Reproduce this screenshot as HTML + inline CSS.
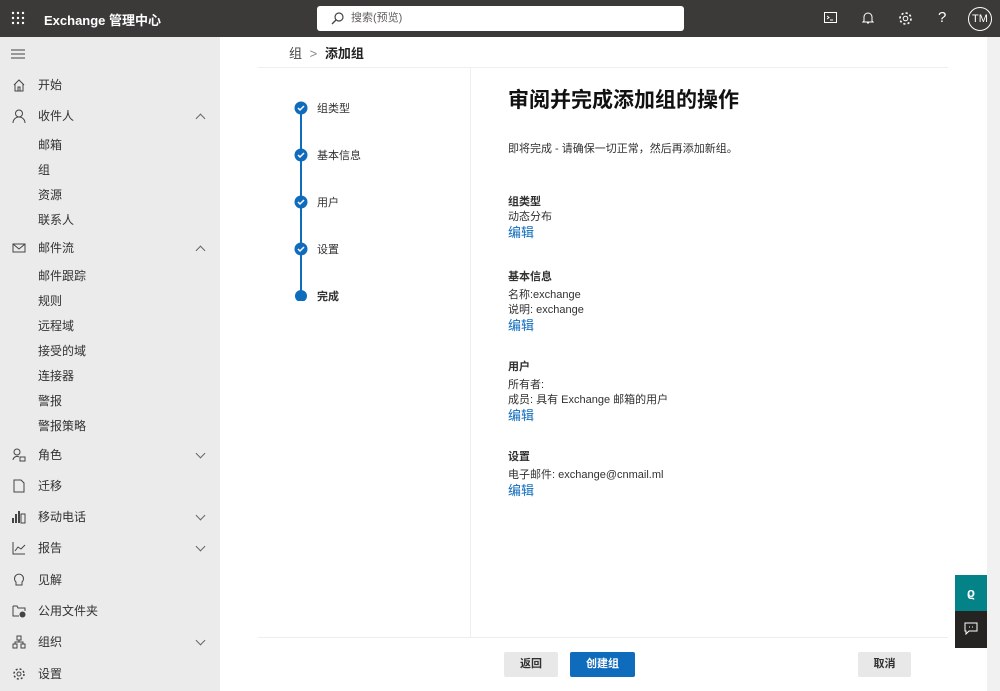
<!DOCTYPE html><html><head><meta charset="utf-8"><style>
*{margin:0;padding:0;box-sizing:border-box}
body{width:1000px;height:691px;overflow:hidden;background:#fff;font-family:"Liberation Sans","Noto Sans CJK SC",sans-serif;color:#323130;position:relative;font-size:12px}
.hd{position:absolute;left:0;top:0;width:1000px;height:37px;background:#3b3a39;color:#fff}
.abs{position:absolute}
.side{position:absolute;left:0;top:37px;width:220px;height:654px;background:#ebebeb}
.ni{position:absolute;left:38px;font-size:12px;color:#323130;margin-top:-2px}
.ic{position:absolute;left:12px;width:14px;height:14px}
.chev{position:absolute;left:197px;width:7px;height:7px;border-left:1px solid #666;border-top:1px solid #666}
.up{transform:rotate(45deg)}.dn{transform:rotate(225deg)}
.lk{color:#0f6cbd;font-size:13px}
.btn{position:absolute;top:652px;height:25px;font-size:11px;font-weight:bold;text-align:center;line-height:25px;border-radius:2px}
</style></head><body>
<div class="hd">
<svg class="abs" style="left:11px;top:11px" width="14" height="14"><g fill="#fff"><circle cx="2" cy="2" r="1.2"/><circle cx="7" cy="2" r="1.2"/><circle cx="12" cy="2" r="1.2"/><circle cx="2" cy="7" r="1.2"/><circle cx="7" cy="7" r="1.2"/><circle cx="12" cy="7" r="1.2"/><circle cx="2" cy="12" r="1.2"/><circle cx="7" cy="12" r="1.2"/><circle cx="12" cy="12" r="1.2"/></g></svg>
<div class="abs" style="left:44px;top:10px;font-size:13px;font-weight:bold">Exchange 管理中心</div>
<div class="abs" style="left:317px;top:6px;width:367px;height:25px;background:#fff;border-radius:3px;color:#605e5c;font-size:11px;line-height:25px;padding-left:34px">搜索(预览)
<svg class="abs" style="left:14px;top:6px" width="13" height="13"><circle cx="8" cy="5" r="4" fill="none" stroke="#444" stroke-width="1.2"/><path d="M5 8L1 12" stroke="#444" stroke-width="1.3"/></svg></div>
<svg class="abs" style="left:824px;top:12px" width="13" height="11"><rect x=".5" y=".5" width="12" height="10" fill="none" stroke="#fff"/><path d="M3 4l2 1.5-2 1.5M6 8h3" stroke="#fff" fill="none"/></svg>
<svg class="abs" style="left:862px;top:11px" width="12" height="14"><path d="M2 10V6a4 4 0 018 0v4l1 1H1zM5 12h2" stroke="#fff" fill="none"/></svg>
<svg class="abs" style="left:898px;top:11px" width="15" height="15"><circle cx="7.5" cy="7.5" r="2.3" fill="none" stroke="#fff"/><circle cx="7.5" cy="7.5" r="5.5" fill="none" stroke="#fff" stroke-width="1.6" stroke-dasharray="2.2 2.1"/></svg>
<div class="abs" style="left:938px;top:9px;font-size:15px">?</div>
<div class="abs" style="left:968px;top:7px;width:24px;height:24px;border:1px solid #fff;border-radius:50%;font-size:11px;text-align:center;line-height:22px">TM</div>
</div>
<div class="side">
<svg class="abs" style="left:11px;top:12px" width="14" height="10"><path d="M0 1h14M0 5h14M0 9h14" stroke="#444"/></svg>
<svg class="ic" style="top:41px"><path d="M2 7L7 2l5 5M3 6v7h8V6M6 13V9h2v4" stroke="#444" fill="none"/></svg><div class="ni" style="top:41px">开始</div>
<svg class="ic" style="top:72px"><circle cx="7" cy="4.5" r="3.5" fill="none" stroke="#444"/><path d="M1 14a6 6 0 0112 0" stroke="#444" fill="none"/></svg><div class="ni" style="top:72px">收件人</div><div class="chev up" style="top:78px"></div>
<div class="ni" style="top:101px">邮箱</div><div class="ni" style="top:126px">组</div><div class="ni" style="top:151px">资源</div><div class="ni" style="top:176px">联系人</div>
<svg class="ic" style="top:204px"><rect x="1" y="3" width="12" height="8" fill="none" stroke="#444"/><path d="M1 3l6 5 6-5" stroke="#444" fill="none"/></svg><div class="ni" style="top:204px">邮件流</div><div class="chev up" style="top:210px"></div>
<div class="ni" style="top:232px">邮件跟踪</div><div class="ni" style="top:257px">规则</div><div class="ni" style="top:282px">远程域</div><div class="ni" style="top:307px">接受的域</div><div class="ni" style="top:332px">连接器</div><div class="ni" style="top:357px">警报</div><div class="ni" style="top:382px">警报策略</div>
<svg class="ic" style="top:411px"><circle cx="5" cy="4" r="3" fill="none" stroke="#444"/><path d="M1 12a4 4 0 016-3" stroke="#444" fill="none"/><rect x="8" y="9" width="5" height="4" fill="none" stroke="#444"/></svg><div class="ni" style="top:411px">角色</div><div class="chev dn" style="top:413px"></div>
<svg class="ic" style="top:442px"><path d="M2 1h7l3 3v9H2z" stroke="#444" fill="none"/></svg><div class="ni" style="top:442px">迁移</div>
<svg class="ic" style="top:473px"><path d="M1 13V8M4 13V4M7 13V1" stroke="#444" stroke-width="2"/><rect x="9" y="4" width="4" height="9" fill="none" stroke="#444"/></svg><div class="ni" style="top:473px">移动电话</div><div class="chev dn" style="top:475px"></div>
<svg class="ic" style="top:504px"><path d="M1 1v12h12M3 10l3-4 3 2 4-4" stroke="#444" fill="none"/></svg><div class="ni" style="top:504px">报告</div><div class="chev dn" style="top:506px"></div>
<svg class="ic" style="top:536px"><path d="M4 9a4.5 4.5 0 116 0v3H4z" stroke="#444" fill="none"/></svg><div class="ni" style="top:536px">见解</div>
<svg class="ic" style="top:567px"><path d="M1 2h4l1 2h7v3M1 2v10h6" stroke="#444" fill="none"/><circle cx="10.5" cy="10.5" r="3" fill="#444"/></svg><div class="ni" style="top:567px">公用文件夹</div>
<svg class="ic" style="top:598px"><rect x="5" y="1" width="4" height="4" fill="none" stroke="#444"/><rect x="1" y="9" width="4" height="4" fill="none" stroke="#444"/><rect x="9" y="9" width="4" height="4" fill="none" stroke="#444"/><path d="M7 5v2H3v2M7 7h4v2" stroke="#444" fill="none"/></svg><div class="ni" style="top:598px">组织</div><div class="chev dn" style="top:600px"></div>
<svg class="ic" style="top:630px"><circle cx="7" cy="7" r="2" fill="none" stroke="#444"/><circle cx="7" cy="7" r="5" fill="none" stroke="#444" stroke-width="1.5" stroke-dasharray="2 2"/></svg><div class="ni" style="top:630px">设置</div>
</div>
<div class="abs" style="left:987px;top:37px;width:13px;height:654px;background:#f1f1f1"></div>
<div class="abs" style="left:289px;top:43px;font-size:13px;color:#444">组 <span style="color:#888;margin:0 4px">&gt;</span> <b style="color:#222">添加组</b></div>
<div class="abs" style="left:258px;top:67px;width:690px;height:1px;background:#eee"></div>
<div class="abs" style="left:470px;top:68px;width:1px;height:569px;background:#eee"></div>
<div class="abs" style="left:258px;top:637px;width:690px;height:1px;background:#eee"></div>
<div class="abs" style="left:300px;top:114px;width:2px;height:180px;background:#0f6cbd"></div>
<svg class="abs" style="left:294px;top:101px" width="14" height="200">
<g fill="#0f6cbd"><circle cx="7" cy="7" r="6.5"/><circle cx="7" cy="54" r="6.5"/><circle cx="7" cy="101" r="6.5"/><circle cx="7" cy="148" r="6.5"/><circle cx="7" cy="195" r="6"/></g>
<g stroke="#fff" stroke-width="1.5" fill="none"><path d="M4 7l2 2 4-4"/><path d="M4 54l2 2 4-4"/><path d="M4 101l2 2 4-4"/><path d="M4 148l2 2 4-4"/></g></svg>
<div class="abs" style="left:317px;top:100px;font-size:11px">组类型</div><div class="abs" style="left:317px;top:147px;font-size:11px">基本信息</div><div class="abs" style="left:317px;top:194px;font-size:11px">用户</div><div class="abs" style="left:317px;top:241px;font-size:11px">设置</div><div class="abs" style="left:317px;top:288px;font-weight:bold;font-size:11px">完成</div>
<div class="abs" style="left:508px;top:84px;font-size:21px;font-weight:bold;color:#111">审阅并完成添加组的操作</div>
<div class="abs" style="left:508px;top:140px;font-size:11px">即将完成 - 请确保一切正常，然后再添加新组。</div>
<div class="abs" style="left:508px;top:195px;font-size:11px;line-height:15px"><b>组类型</b><br>动态分布<br><span class="lk">编辑</span></div>
<div class="abs" style="left:508px;top:270px;font-size:11px;line-height:15px"><b>基本信息</b><br><span style="display:block;margin-top:3px">名称:exchange</span>说明: exchange<br><span class="lk">编辑</span></div>
<div class="abs" style="left:508px;top:360px;font-size:11px;line-height:15px"><b>用户</b><br><span style="display:block;margin-top:3px">所有者:</span>成员: 具有 Exchange 邮箱的用户<br><span class="lk">编辑</span></div>
<div class="abs" style="left:508px;top:450px;font-size:11px;line-height:15px"><b>设置</b><br><span style="display:block;margin-top:3px">电子邮件: exchange@cnmail.ml</span><span class="lk">编辑</span></div>
<div class="btn" style="left:504px;width:54px;background:#e8e8e8">返回</div>
<div class="btn" style="left:570px;width:65px;background:#0f6cbd;color:#fff">创建组</div>
<div class="btn" style="left:858px;width:53px;background:#e8e8e8">取消</div>
<div class="abs" style="left:955px;top:575px;width:32px;height:36px;background:#038387;color:#fff;font-weight:bold;text-align:center;line-height:36px;font-size:13px">ϱ</div>
<div class="abs" style="left:955px;top:611px;width:32px;height:37px;background:#252423"><svg style="margin:11px 9px" width="14" height="13"><path d="M1 1h12v8H5l-3 3V9H1z" stroke="#fff" fill="none"/><path d="M5 5h1M8 5h1" stroke="#fff"/></svg></div>
</body></html>
